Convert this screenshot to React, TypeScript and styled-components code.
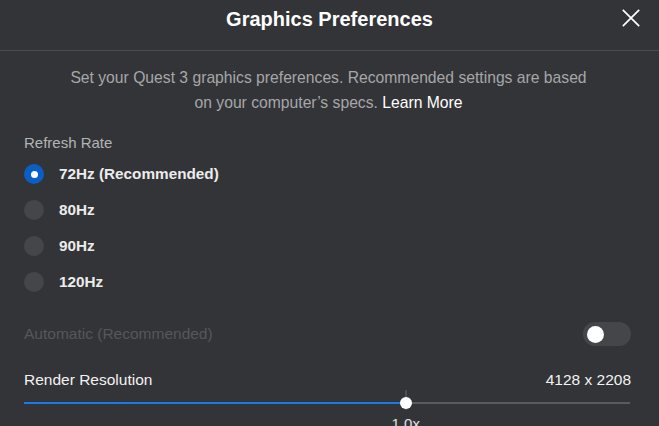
import React from 'react';
import styled, { createGlobalStyle } from 'styled-components';

const GlobalStyle = createGlobalStyle`
  html, body {
    margin: 0;
    padding: 0;
    background: #333437;
    font-family: 'Liberation Sans', Arial, sans-serif;
    overflow: hidden;
  }
`;

const Dialog = styled.div`
  width: 659px;
  height: 426px;
  background: #333437;
  color: #ffffff;
  overflow: hidden;
`;

const Header = styled.div`
  height: 51px;
  display: grid;
  grid-template-columns: 1fr auto 1fr;
  align-items: start;
  border-bottom: 1px solid #4a4b4e;
  box-sizing: border-box;
`;

const Title = styled.div`
  grid-column: 2;
  margin-top: 8px;
  font-size: 20px;
  line-height: 23px;
  font-weight: 700;
  color: #ffffff;
`;

const CloseButton = styled.button`
  grid-column: 3;
  justify-self: end;
  margin: 9px 19px 0 0;
  width: 18px;
  height: 18px;
  padding: 0;
  border: none;
  background: transparent;
  display: flex;
  cursor: pointer;
`;

const Body = styled.div`
  padding: 0 28px 0 24px;
`;

const Description = styled.p`
  margin: 14px 0 0;
  text-align: center;
  font-size: 15.7px;
  line-height: 25px;
  color: #a6a7a9;
  padding-left: 2px;
`;

const LearnMore = styled.a`
  color: #ffffff;
  text-decoration: none;
`;

const SectionLabel = styled.div`
  margin-top: 18px;
  font-size: 15px;
  color: #b3b4b6;
  line-height: 20px;
`;

const RadioList = styled.div`
  margin-top: 11px;
  display: flex;
  flex-direction: column;
  gap: 16px;
`;

const RadioRow = styled.label`
  display: flex;
  align-items: center;
  gap: 15px;
  height: 20px;
  font-size: 15.3px;
  font-weight: 700;
  color: #ececec;
  cursor: pointer;
`;

const RadioDot = styled.span<{ checked: boolean }>`
  width: 20px;
  height: 20px;
  border-radius: 50%;
  background: ${({ checked }) => (checked ? '#0a5ec4' : '#45464a')};
  display: flex;
  align-items: center;
  justify-content: center;
  &::after {
    content: '';
    width: 7px;
    height: 7px;
    border-radius: 50%;
    background: #ffffff;
    display: ${({ checked }) => (checked ? 'block' : 'none')};
  }
`;

const ToggleRow = styled.div`
  margin-top: 30px;
  display: flex;
  justify-content: space-between;
  align-items: center;
  height: 24px;
`;

const DisabledLabel = styled.span`
  font-size: 15.5px;
  color: #56575a;
`;

const Toggle = styled.span<{ on: boolean }>`
  width: 48px;
  height: 24px;
  border-radius: 12px;
  background: #45464a;
  display: flex;
  align-items: center;
  padding: 0 4px;
  box-sizing: border-box;
  justify-content: ${({ on }) => (on ? 'flex-end' : 'flex-start')};
  &::after {
    content: '';
    width: 17px;
    height: 17px;
    border-radius: 50%;
    background: #ffffff;
  }
`;

const ResolutionRow = styled.div`
  margin-top: 24px;
  display: flex;
  justify-content: space-between;
  align-items: center;
  font-size: 15.5px;
  color: #f2f2f2;
  line-height: 20px;
`;

const SliderWrap = styled.div`
  position: relative;
  height: 36px;
  margin-right: 1px;
`;

const Track = styled.div`
  position: absolute;
  left: 0;
  right: 0;
  top: 12px;
  height: 2px;
  background: #5a5b5e;
`;

const Fill = styled.div`
  position: absolute;
  left: 0;
  top: 12px;
  height: 2px;
  background: #1b7be6;
`;

const Tick = styled.div`
  position: absolute;
  top: 0;
  width: 1px;
  height: 20px;
  background: #6a6b6e;
  transform: translateX(-0.5px);
`;

const Thumb = styled.div`
  position: absolute;
  top: 7px;
  width: 12px;
  height: 12px;
  border-radius: 50%;
  background: #ffffff;
  transform: translateX(-6px);
`;

const TickLabel = styled.div`
  position: absolute;
  top: 25px;
  font-size: 15px;
  color: #e0e0e0;
  transform: translateX(-50%);
`;

const rates = ['72Hz (Recommended)', '80Hz', '90Hz', '120Hz'];

export default function App() {
  const selected = 0;
  const pct = 63;
  return (
    <>
      <GlobalStyle />
      <Dialog>
        <Header>
          <Title>Graphics Preferences</Title>
          <CloseButton aria-label="Close">
            <svg width="18" height="18" viewBox="0 0 18 18">
              <path d="M0.8 0.8 L17.2 17.2 M17.2 0.8 L0.8 17.2" stroke="#ffffff" strokeWidth="1.7" />
            </svg>
          </CloseButton>
        </Header>
        <Body>
          <Description>
            Set your Quest 3 graphics preferences. Recommended settings are based
            <br />
            on your computer’s specs. <LearnMore href="#">Learn More</LearnMore>
          </Description>
          <SectionLabel>Refresh Rate</SectionLabel>
          <RadioList>
            {rates.map((r, i) => (
              <RadioRow key={r}>
                <RadioDot checked={i === selected} />
                {r}
              </RadioRow>
            ))}
          </RadioList>
          <ToggleRow>
            <DisabledLabel>Automatic (Recommended)</DisabledLabel>
            <Toggle on={false} />
          </ToggleRow>
          <ResolutionRow>
            <span>Render Resolution</span>
            <span>4128 x 2208</span>
          </ResolutionRow>
          <SliderWrap>
            <Track />
            <Fill style={{ width: `${pct}%` }} />
            <Tick style={{ left: `${pct}%` }} />
            <Thumb style={{ left: `${pct}%` }} />
            <TickLabel style={{ left: `${pct}%` }}>1.0x</TickLabel>
          </SliderWrap>
        </Body>
      </Dialog>
    </>
  );
}
